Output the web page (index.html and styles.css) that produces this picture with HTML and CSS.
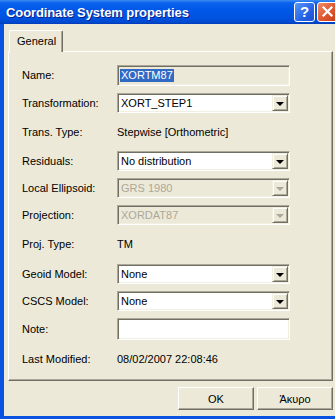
FILE: index.html
```html
<!DOCTYPE html>
<html lang="en">
<head>
    <meta charset="UTF-8">
    <meta name="viewport" content="width=device-width, initial-scale=1.0">
    <title>Coordinate System properties</title>
    <link rel="stylesheet" href="styles.css">
</head>
<body>
    <div class="window">
        <div class="titlebar">
            <span class="title">Coordinate System properties</span>
            <div class="caption-buttons">
                <span class="cap-btn help">?</span>
                <span class="cap-btn close">
                    <svg width="11" height="11" viewBox="0 0 11 11">
                        <path d="M1.5 1.5 L9.5 9.5 M9.5 1.5 L1.5 9.5" stroke="#fff" stroke-width="2.2" stroke-linecap="square"/>
                    </svg>
                </span>
            </div>
        </div>

        <div class="frame">
            <div class="tabs">
                <div class="tab">General</div>
            </div>

            <div class="panel">
                <div class="form">
                    <span class="label">Name:</span>
                    <div class="field readonly"><span class="selected">XORTM87</span></div>

                    <span class="label">Transformation:</span>
                    <div class="field combo"><span class="value">XORT_STEP1</span><span class="drop"></span></div>

                    <span class="label">Trans. Type:</span>
                    <span class="static">Stepwise [Orthometric]</span>

                    <span class="label">Residuals:</span>
                    <div class="field combo"><span class="value">No distribution</span><span class="drop"></span></div>

                    <span class="label">Local Ellipsoid:</span>
                    <div class="field combo disabled"><span class="value">GRS 1980</span><span class="drop"></span></div>

                    <span class="label">Projection:</span>
                    <div class="field combo disabled"><span class="value">XORDAT87</span><span class="drop"></span></div>

                    <span class="label">Proj. Type:</span>
                    <span class="static">TM</span>

                    <span class="label">Geoid Model:</span>
                    <div class="field combo"><span class="value">None</span><span class="drop"></span></div>

                    <span class="label">CSCS Model:</span>
                    <div class="field combo"><span class="value">None</span><span class="drop"></span></div>

                    <span class="label">Note:</span>
                    <div class="field"></div>

                    <span class="label">Last Modified:</span>
                    <span class="static">08/02/2007 22:08:46</span>
                </div>
            </div>

            <div class="actions">
                <button class="btn">OK</button>
                <button class="btn">Άκυρο</button>
            </div>
        </div>
    </div>
</body>
</html>
```

FILE: styles.css
```css
:root {
    --face: #ECE9D8;
    --shadow-dark: #716F64;
    --shadow: #ACA899;
    --light: #F1EFE2;
    --xp-blue: #0A53E0;
}

* {
    margin: 0;
    padding: 0;
    box-sizing: border-box;
}

body {
    width: 335px;
    height: 419px;
    overflow: hidden;
    background: var(--face);
    font-family: 'Liberation Sans', Arial, sans-serif;
    font-size: 11px;
    color: #000;
}

.window {
    width: 341px;
    height: 419px;
    display: flex;
    flex-direction: column;
}

.titlebar {
    height: 24px;
    flex: none;
    display: flex;
    align-items: center;
    justify-content: space-between;
    padding: 0 3px 0 6px;
    background: linear-gradient(to bottom, #3C8CF3 0%, #0A62EC 12%, #0058E8 40%, #0053E0 75%, #0049D0 92%, #003DB8 100%);
}

.title {
    color: #fff;
    font-weight: bold;
    font-size: 13px;
    letter-spacing: -0.1px;
    text-shadow: 1px 1px 0 #0A1E8C;
}

.caption-buttons {
    display: flex;
    gap: 2px;
    margin-top: -1px;
}

.cap-btn {
    width: 21px;
    height: 20px;
    border: 1px solid #fff;
    border-radius: 3px;
    display: flex;
    align-items: center;
    justify-content: center;
    color: #fff;
}

.help {
    background: linear-gradient(135deg, #5A96F8, #2563E8 60%, #1C50D0);
    font-weight: bold;
    font-size: 15px;
}

.close {
    background: linear-gradient(135deg, #F08C6C, #E05A32 50%, #C83C18);
}

.frame {
    flex: 1;
    display: flex;
    flex-direction: column;
    padding: 6px 4px 6px 4px;
    border-left: 4px solid var(--xp-blue);
    border-right: 4px solid var(--xp-blue);
    border-bottom: 3px solid var(--xp-blue);
    background: var(--face);
}

.tabs {
    display: flex;
    height: 21px;
    padding-left: 1px;
    position: relative;
    z-index: 1;
}

.tab {
    height: 22px;
    padding: 4px 6px 0 7px;
    background: var(--face);
    border-top: 1px solid #fff;
    border-left: 1px solid #fff;
    border-right: 1px solid var(--shadow-dark);
    box-shadow: inset -1px 0 0 var(--shadow);
    border-radius: 2px 2px 0 0;
}

.panel {
    height: 330px;
    flex: none;
    border-top: 1px solid #fff;
    border-left: 1px solid #fff;
    border-right: 1px solid var(--shadow-dark);
    border-bottom: 1px solid var(--shadow-dark);
    box-shadow: inset -1px -1px 0 var(--shadow);
    padding: 13px 0 0 13px;
}

.form {
    display: grid;
    grid-template-columns: 95px 173px;
    grid-template-rows: 21px 20px 24px 20px 20px 20px 25px 20px 20px 22px 25px;
    row-gap: 7px;
    align-items: center;
}

.label {
    line-height: 13px;
}

.static {
    line-height: 13px;
}

.field {
    height: 100%;
    display: flex;
    align-items: center;
    background: #fff;
    border-top: 1px solid var(--shadow);
    border-left: 1px solid var(--shadow);
    border-bottom: 1px solid #fff;
    border-right: 1px solid #fff;
    box-shadow: inset 1px 1px 0 var(--shadow-dark), inset -1px -1px 0 var(--light);
    padding: 0 2px 0 3px;
}

.field.readonly {
    background: var(--face);
}

.selected {
    background: #316AC5;
    color: #fff;
    line-height: 13px;
    padding: 0 1px;
    margin-left: -1px;
}

.combo .value {
    flex: 1;
}

.drop {
    width: 16px;
    height: 16px;
    background: var(--face);
    border-top: 1px solid var(--light);
    border-left: 1px solid var(--light);
    border-right: 1px solid var(--shadow-dark);
    border-bottom: 1px solid var(--shadow-dark);
    box-shadow: inset 1px 1px 0 #fff, inset -1px -1px 0 var(--shadow);
    display: flex;
    align-items: center;
    justify-content: center;
    margin-right: -1px;
}

.drop::after {
    content: "";
    border-left: 4px solid transparent;
    border-right: 4px solid transparent;
    border-top: 4px solid #000;
    margin-top: 1px;
}

.combo.disabled {
    background: var(--face);
    color: var(--shadow);
}

.combo.disabled .drop::after {
    border-top-color: var(--shadow);
}

.actions {
    display: flex;
    justify-content: flex-end;
    gap: 3px;
    margin-top: 6px;
    padding-right: 0;
}

.btn {
    width: 76px;
    height: 23px;
    font-family: inherit;
    font-size: 11px;
    color: #000;
    background: var(--face);
    border-top: 1px solid #fff;
    border-left: 1px solid #fff;
    border-right: 1px solid var(--shadow-dark);
    border-bottom: 1px solid var(--shadow-dark);
    box-shadow: inset -1px -1px 0 var(--shadow);
}
```
